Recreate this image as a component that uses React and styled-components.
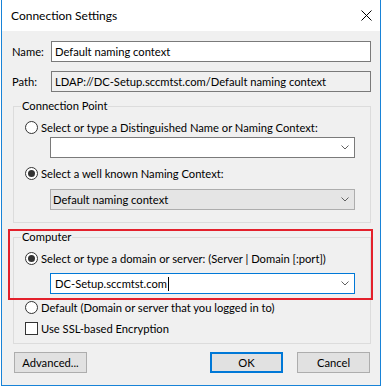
import React from 'react';
import styled, { createGlobalStyle } from 'styled-components';

const Global = createGlobalStyle`
  html, body { margin: 0; padding: 0; background: #ffffff; }
  body {
    font-family: Lato, "Liberation Sans", sans-serif;
    font-size: 11.2px;
    color: #000;
  }
  * { box-sizing: border-box; }
`;

const Window = styled.div`
  position: relative;
  margin-left: 1px;
  width: 380px;
  height: 386px;
  border: 1px solid #1883d7;
  border-top: none;
  background: #f0f0f0;
  display: flex;
  flex-direction: column;
`;

const TitleBar = styled.div`
  height: 31px;
  background: #ffffff;
  display: flex;
  align-items: center;
  justify-content: space-between;
  padding: 0 8px 0 9px;
  font-size: 12px;
`;

const Body = styled.div`
  display: flex;
  flex-direction: column;
  padding-top: 10px;
`;

const FieldRow = styled.div`
  display: flex;
  align-items: center;
  height: 21px;
  margin-left: 10px;
  margin-top: ${p => p.$mt || 0}px;
`;

const Label = styled.div`
  width: 39px;
  line-height: 16px;
`;

const TextBox = styled.div`
  width: 320px;
  height: 21px;
  border: 1px solid #7a7a7a;
  background: ${p => (p.$readOnly ? '#f0f0f0' : '#ffffff')};
  display: flex;
  align-items: center;
  padding-left: 3px;
  white-space: nowrap;
`;

const Group = styled.fieldset`
  margin: ${p => p.$mt || 0}px 0 0 11px;
  width: 358px;
  padding: 0;
  border: 1px solid #dcdcdc;
  min-width: 0;
`;

const Legend = styled.legend`
  margin-left: 7px;
  padding: 0 1px;
  line-height: 16px;
  font-size: 11.2px;
`;

const GroupBody = styled.div`
  display: flex;
  flex-direction: column;
  padding: 5px 0 ${p => p.$pb}px 11px;
`;

const OptionRow = styled.div`
  display: flex;
  align-items: center;
  height: 16px;
  gap: 3px;
  margin-top: ${p => p.$mt || 0}px;
  white-space: nowrap;
`;

const Radio = styled.span`
  width: 13px;
  height: 13px;
  border-radius: 50%;
  border: 1px solid #333333;
  background: #ffffff;
  display: flex;
  align-items: center;
  justify-content: center;
  flex: none;
  &::after {
    content: '';
    display: ${p => (p.$checked ? 'block' : 'none')};
    width: 7px;
    height: 7px;
    border-radius: 50%;
    background: #333333;
  }
`;

const Check = styled.span`
  width: 13px;
  height: 13px;
  border: 1px solid #333333;
  background: #ffffff;
  flex: none;
`;

const Combo = styled.div`
  margin-left: 25px;
  margin-top: ${p => p.$mt || 0}px;
  width: 305px;
  height: 21px;
  border: 1px solid ${p => (p.$variant === 'list' ? '#adadad' : p.$variant === 'focus' ? '#0078d7' : '#7a7a7a')};
  background: ${p => (p.$variant === 'list' ? '#e5e5e5' : '#ffffff')};
  display: flex;
  align-items: center;
  padding: 0 5px 0 ${p => (p.$variant === 'list' ? 2 : 4)}px;
  white-space: nowrap;
`;

const ComboText = styled.span`
  flex: 1;
  display: flex;
  align-items: center;
`;

const Caret = styled.span`
  display: inline-block;
  width: 1px;
  height: 14px;
  background: #000;
  margin-left: 1px;
`;

const Chevron = () => (
  <svg width="8" height="5" viewBox="0 0 8 5">
    <polyline points="0.5,0.5 4,4 7.5,0.5" fill="none" stroke="#606060" strokeWidth="1" />
  </svg>
);

const CloseIcon = () => (
  <svg width="11" height="11" viewBox="0 0 11 11">
    <path d="M0.5 0.5 L10.5 10.5 M10.5 0.5 L0.5 10.5" stroke="#000" strokeWidth="1" />
  </svg>
);

const ButtonRow = styled.div`
  display: flex;
  margin-top: 8px;
  padding: 0 10px 0 12px;
`;

const Button = styled.div`
  width: 73px;
  height: 21px;
  background: #e1e1e1;
  border: ${p => (p.$default ? '2px solid #0078d7' : '1px solid #adadad')};
  display: flex;
  align-items: center;
  justify-content: center;
  margin-left: ${p => p.$ml || 0};
`;

const Highlight = styled.div`
  position: absolute;
  left: 6px;
  top: 229px;
  width: 365px;
  height: 71px;
  border: 2px solid #e3202b;
  pointer-events: none;
`;

export default function App() {
  return (
    <>
      <Global />
      <Window>
        <TitleBar>
          <span>Connection Settings</span>
          <CloseIcon />
        </TitleBar>
        <Body>
          <FieldRow>
            <Label>Name:</Label>
            <TextBox>Default naming context</TextBox>
          </FieldRow>
          <FieldRow $mt={9}>
            <Label>Path:</Label>
            <TextBox $readOnly>LDAP://DC-Setup.sccmtst.com/Default naming context</TextBox>
          </FieldRow>

          <Group $mt={6}>
            <Legend>Connection Point</Legend>
            <GroupBody $pb={12}>
              <OptionRow>
                <Radio />
                <span>Select or type a Distinguished Name or Naming Context:</span>
              </OptionRow>
              <Combo $mt={2}>
                <ComboText />
                <Chevron />
              </Combo>
              <OptionRow $mt={7}>
                <Radio $checked />
                <span>Select a well known Naming Context:</span>
              </OptionRow>
              <Combo $mt={8} $variant="list">
                <ComboText>Default naming context</ComboText>
                <Chevron />
              </Combo>
            </GroupBody>
          </Group>

          <Group $mt={6}>
            <Legend>Computer</Legend>
            <GroupBody $pb={7}>
              <OptionRow>
                <Radio $checked />
                <span>Select or type a domain or server: (Server | Domain [:port])</span>
              </OptionRow>
              <Combo $mt={7} $variant="focus">
                <ComboText>
                  DC-Setup.sccmtst.com
                  <Caret />
                </ComboText>
                <Chevron />
              </Combo>
              <OptionRow $mt={5}>
                <Radio />
                <span>Default (Domain or server that you logged in to)</span>
              </OptionRow>
              <OptionRow $mt={5}>
                <Check />
                <span>Use SSL-based Encryption</span>
              </OptionRow>
            </GroupBody>
          </Group>

          <ButtonRow>
            <Button>Advanced...</Button>
            <Button $default $ml="auto">OK</Button>
            <Button $ml="14px">Cancel</Button>
          </ButtonRow>
        </Body>
        <Highlight />
      </Window>
    </>
  );
}
